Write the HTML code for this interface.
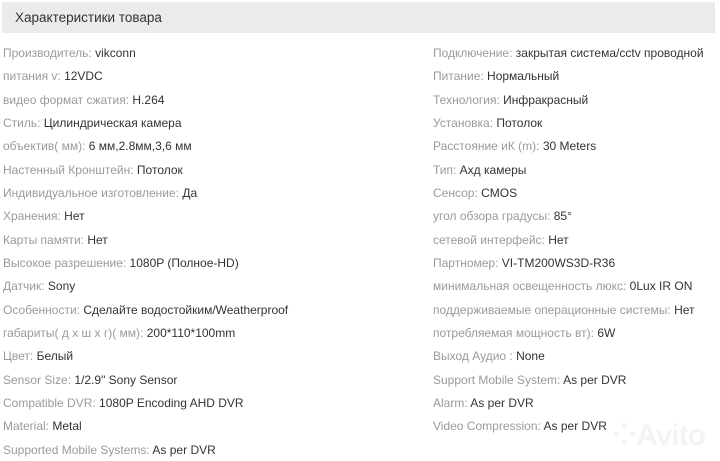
<!DOCTYPE html>
<html><head><meta charset="utf-8"><style>
body{margin:0;width:720px;height:461px;background:#fff;font-family:"Liberation Sans","DejaVu Sans",sans-serif;overflow:hidden;position:relative}
.h{position:absolute;left:2px;top:2px;width:713px;height:31px;background:#ebebeb;color:#333;font-size:13.5px;line-height:31px;padding-left:13px;box-sizing:border-box}
.r{position:absolute;font-size:12px;color:#9a9a9a;white-space:nowrap;line-height:16px}
.r b{font-weight:normal;color:#333}
.wm{position:absolute;left:612px;top:418px;font-size:30px;color:#f3f3f3;font-weight:bold;letter-spacing:-1px}
</style></head><body>
<div class="h">Характеристики товара</div>
<div class="wm">⁘Avito</div>
<div class="r" style="left:3px;top:45px">Производитель: <b>vikconn</b></div>
<div class="r" style="left:3px;top:68px">питания v: <b>12VDC</b></div>
<div class="r" style="left:3px;top:92px">видео формат сжатия: <b>H.264</b></div>
<div class="r" style="left:3px;top:115px">Стиль: <b>Цилиндрическая камера</b></div>
<div class="r" style="left:3px;top:138px">объектив( мм): <b>6 мм,2.8мм,3,6 мм</b></div>
<div class="r" style="left:3px;top:162px">Настенный Кронштейн: <b>Потолок</b></div>
<div class="r" style="left:3px;top:185px">Индивидуальное изготовление: <b>Да</b></div>
<div class="r" style="left:3px;top:208px">Хранения: <b>Нет</b></div>
<div class="r" style="left:3px;top:232px">Карты памяти: <b>Нет</b></div>
<div class="r" style="left:3px;top:255px">Высокое разрешение: <b>1080P (Полное-HD)</b></div>
<div class="r" style="left:3px;top:278px">Датчик: <b>Sony</b></div>
<div class="r" style="left:3px;top:302px">Особенности: <b>Сделайте водостойким/Weatherproof</b></div>
<div class="r" style="left:3px;top:325px">габариты( д х ш х г)( мм): <b>200*110*100mm</b></div>
<div class="r" style="left:3px;top:348px">Цвет: <b>Белый</b></div>
<div class="r" style="left:3px;top:372px">Sensor Size: <b>1/2.9" Sony Sensor</b></div>
<div class="r" style="left:3px;top:395px">Compatible DVR: <b>1080P Encoding AHD DVR</b></div>
<div class="r" style="left:3px;top:418px">Material: <b>Metal</b></div>
<div class="r" style="left:3px;top:442px">Supported Mobile Systems: <b>As per DVR</b></div>

<div class="r" style="left:433px;top:45px">Подключение: <b>закрытая система/cctv проводной</b></div>
<div class="r" style="left:433px;top:68px">Питание: <b>Нормальный</b></div>
<div class="r" style="left:433px;top:92px">Технология: <b>Инфракрасный</b></div>
<div class="r" style="left:433px;top:115px">Установка: <b>Потолок</b></div>
<div class="r" style="left:433px;top:138px">Расстояние иК (m): <b>30 Meters</b></div>
<div class="r" style="left:433px;top:162px">Тип: <b>Ахд камеры</b></div>
<div class="r" style="left:433px;top:185px">Сенсор: <b>CMOS</b></div>
<div class="r" style="left:433px;top:208px">угол обзора градусы: <b>85°</b></div>
<div class="r" style="left:433px;top:232px">сетевой интерфейс: <b>Нет</b></div>
<div class="r" style="left:433px;top:255px">Партномер: <b>VI-TM200WS3D-R36</b></div>
<div class="r" style="left:433px;top:278px">минимальная освещенность люкс: <b>0Lux IR ON</b></div>
<div class="r" style="left:433px;top:302px">поддерживаемые операционные системы: <b>Нет</b></div>
<div class="r" style="left:433px;top:325px">потребляемая мощность вт): <b>6W</b></div>
<div class="r" style="left:433px;top:348px">Выход Аудио : <b>None</b></div>
<div class="r" style="left:433px;top:372px">Support Mobile System: <b>As per DVR</b></div>
<div class="r" style="left:433px;top:395px">Alarm: <b>As per DVR</b></div>
<div class="r" style="left:433px;top:418px">Video Compression: <b>As per DVR</b></div>
</body></html>
